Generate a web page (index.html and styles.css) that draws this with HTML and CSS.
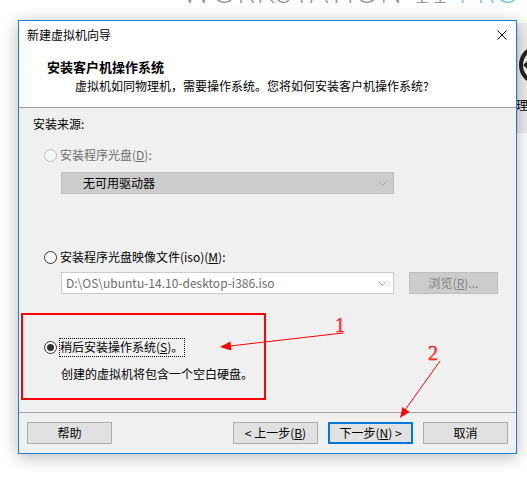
FILE: index.html
```html
<!DOCTYPE html>
<html lang="zh-CN">

<head>
    <meta charset="UTF-8">
    <meta name="viewport" content="width=device-width, initial-scale=1.0">
    <title>新建虚拟机向导</title>
    <link rel="stylesheet" href="styles.css">
</head>

<body>
    <div class="desktop">
        <div class="brand">WORKSTATION 11 <span class="brand_pro">PRO</span></div>

        <div class="back_window">
            <svg class="back_icon" width="24" height="60" viewBox="0 0 24 60">
                <circle cx="21" cy="22" r="18" fill="none" stroke="#222" stroke-width="4"/>
                <path d="M16 22 L8 22 M12 17 L7 22 L12 27" fill="none" stroke="#222" stroke-width="2.5"/>
            </svg>
            <span class="back_text">理</span>
        </div>

        <div class="wizard">
            <div class="title_bar">
                <span>新建虚拟机向导</span>
                <svg class="close_icon" width="10" height="10" viewBox="0 0 10 10">
                    <path d="M0.5 0.5 L9.5 9.5 M9.5 0.5 L0.5 9.5" stroke="#000" stroke-width="1"/>
                </svg>
            </div>
            <div class="header">
                <div class="header_title">安装客户机操作系统</div>
                <div class="header_sub">虚拟机如同物理机，需要操作系统。您将如何安装客户机操作系统?</div>
            </div>

            <div class="content">
                <div class="group_label">安装来源:</div>

                <div class="option option_disc disabled">
                    <span class="radio"></span>安装程序光盘(<u>D</u>):
                </div>
                <div class="combo combo_disabled">
                    <span class="combo_text">无可用驱动器</span>
                    <svg class="chevron" width="9" height="5" viewBox="0 0 9 5"><path d="M0.5 0.5 L4.5 4.5 L8.5 0.5" fill="none" stroke="#a8a8a8"/></svg>
                </div>

                <div class="option option_iso">
                    <span class="radio"></span>安装程序光盘映像文件(iso)(<u>M</u>):
                </div>
                <div class="iso_row">
                    <div class="combo combo_path">
                        <span class="combo_text">D:\OS\ubuntu-14.10-desktop-i386.iso</span>
                        <svg class="chevron" width="9" height="5" viewBox="0 0 9 5"><path d="M0.5 0.5 L4.5 4.5 L8.5 0.5" fill="none" stroke="#a8a8a8"/></svg>
                    </div>
                    <button class="btn btn_browse" disabled>浏览(<u>R</u>)...</button>
                </div>

                <div class="option option_later">
                    <span class="radio radio_checked"></span><span class="focus_text">稍后安装操作系统(<u>S</u>)。</span>
                </div>
                <div class="option_note">创建的虚拟机将包含一个空白硬盘。</div>
            </div>

            <div class="footer">
                <button class="btn btn_help">帮助</button>
                <button class="btn">&lt; 上一步(<u>B</u>)</button>
                <button class="btn btn_default">下一步(<u>N</u>) &gt;</button>
                <button class="btn">取消</button>
            </div>
        </div>

        <!-- 标注：红框和箭头 -->
        <svg class="marks" width="527" height="491" viewBox="0 0 527 491">
            <rect x="22" y="314" width="243" height="85" fill="none" stroke="#ff0000" stroke-width="2"/>
            <path d="M343 333 L230 346" stroke="#ff0000" stroke-width="1"/>
            <polygon points="220,347 231.4,350.5 230.4,341.5" fill="#ff0000"/>
            <path d="M440 361 L405 410" stroke="#ff0000" stroke-width="1"/>
            <polygon points="400,418 409.5,412 402.5,407" fill="#ff0000"/>
            <text x="335" y="332" class="mark_num">1</text>
            <text x="428" y="360" class="mark_num">2</text>
        </svg>
    </div>
</body>

</html>
```

FILE: styles.css
```css
* {
    margin: 0;
    padding: 0;
    box-sizing: border-box;
}

body {
    width: 527px;
    height: 491px;
    overflow: hidden;
    background-color: #fff;
    font-family: "Noto Sans CJK SC", "Noto Sans", sans-serif;
    font-size: 12px;
    color: #000;
}

u {
    text-decoration: underline;
    text-underline-offset: 1px;
}

.desktop {
    position: relative;
    width: 527px;
    height: 491px;
    padding: 20px 0 0 18px;
}

.brand {
    position: absolute;
    top: -23px;
    left: 182px;
    font-family: Lato, "Open Sans", sans-serif;
    font-weight: 300;
    font-size: 29px;
    line-height: 30px;
    letter-spacing: 1.5px;
    color: #8f9498;
    white-space: nowrap;
}

.brand_pro {
    color: #6fc6e6;
}

.back_window {
    position: absolute;
    top: 23px;
    left: 517px;
    width: 20px;
    height: 110px;
    background-color: #ededed;
    border-left: 1px solid #d8d8d8;
}

.back_icon {
    display: block;
    margin-top: 20px;
}

.back_text {
    display: block;
    margin-top: -6px;
    margin-left: -2px;
    font-size: 12px;
    line-height: 16px;
}

.wizard {
    position: relative;
    width: 499px;
    border: 1px solid #1883d7;
    background-color: #f0f0f0;
    box-shadow: 0 3px 16px rgba(0, 0, 0, 0.28);
}

.title_bar {
    display: flex;
    align-items: center;
    justify-content: space-between;
    height: 28px;
    padding: 0 9px 0 8px;
    line-height: 28px;
    background-color: #fff;
}

.close_icon {
    display: block;
}

.header {
    height: 59px;
    padding: 9px 0 0 28px;
    background-color: #fff;
    border-bottom: 1px solid #a0a0a0;
}

.header_title {
    font-size: 13px;
    font-weight: bold;
    line-height: 18px;
}

.header_sub {
    margin-top: 1px;
    padding-left: 28px;
    line-height: 18px;
}

.content {
    height: 304px;
    padding-top: 7px;
}

.group_label {
    padding-left: 14px;
    line-height: 18px;
}

.option {
    display: flex;
    align-items: center;
    height: 18px;
    padding-left: 25px;
    line-height: 18px;
}

.option.disabled {
    color: #6d6d6d;
}

.option_disc {
    margin-top: 13px;
}

.option_iso {
    margin-top: 54px;
}

.option_later {
    margin-top: 44px;
}

.radio {
    flex: none;
    position: relative;
    width: 13px;
    height: 13px;
    margin-right: 3px;
    border: 1px solid #333;
    border-radius: 50%;
    background-color: #fff;
}

.disabled .radio {
    border-color: #bcbcbc;
    background-color: #f7f7f7;
}

.radio_checked::after {
    content: "";
    position: absolute;
    top: 2px;
    left: 2px;
    width: 7px;
    height: 7px;
    border-radius: 50%;
    background-color: #333;
}

.focus_text {
    display: inline-block;
    height: 17px;
    padding: 0 1px 0 0;
    line-height: 16px;
    outline: 1px dotted #000;
    outline-offset: 0;
}

.option_note {
    margin-top: 9px;
    padding-left: 42px;
    line-height: 18px;
}

.combo {
    display: flex;
    align-items: center;
    justify-content: space-between;
    width: 333px;
    height: 22px;
    padding: 0 6px 0 4px;
    border: 1px solid #cccccc;
    background-color: #fff;
}

.combo_disabled {
    margin: 8px 0 0 42px;
    padding-left: 21px;
    background-color: #cccccc;
    border-color: #bfbfbf;
}

.combo_path {
    color: #6d6d6d;
}

.combo_text {
    line-height: 18px;
    white-space: nowrap;
}

.chevron {
    display: block;
    flex: none;
}

.iso_row {
    display: flex;
    gap: 15px;
    margin: 6px 0 0 42px;
}

.btn {
    width: 85px;
    height: 22px;
    border: 1px solid #adadad;
    background-color: #e1e1e1;
    font-family: inherit;
    font-size: 12px;
    line-height: 18px;
    color: #000;
}

.btn_browse {
    width: 89px;
    border-color: #bfbfbf;
    background-color: #cccccc;
    color: #838383;
}

.btn_default {
    border: 2px solid #0078d7;
}

.footer {
    display: flex;
    gap: 10px;
    height: 41px;
    padding: 9px 8px 0 8px;
    border-top: 1px solid #a0a0a0;
}

.btn_help {
    margin-right: auto;
}

.marks {
    position: absolute;
    top: 0;
    left: 0;
    pointer-events: none;
}

.mark_num {
    font-family: "Liberation Serif", serif;
    font-size: 20px;
    fill: #ff4040;
    stroke: #ff0000;
    stroke-width: 0.4;
}
```
